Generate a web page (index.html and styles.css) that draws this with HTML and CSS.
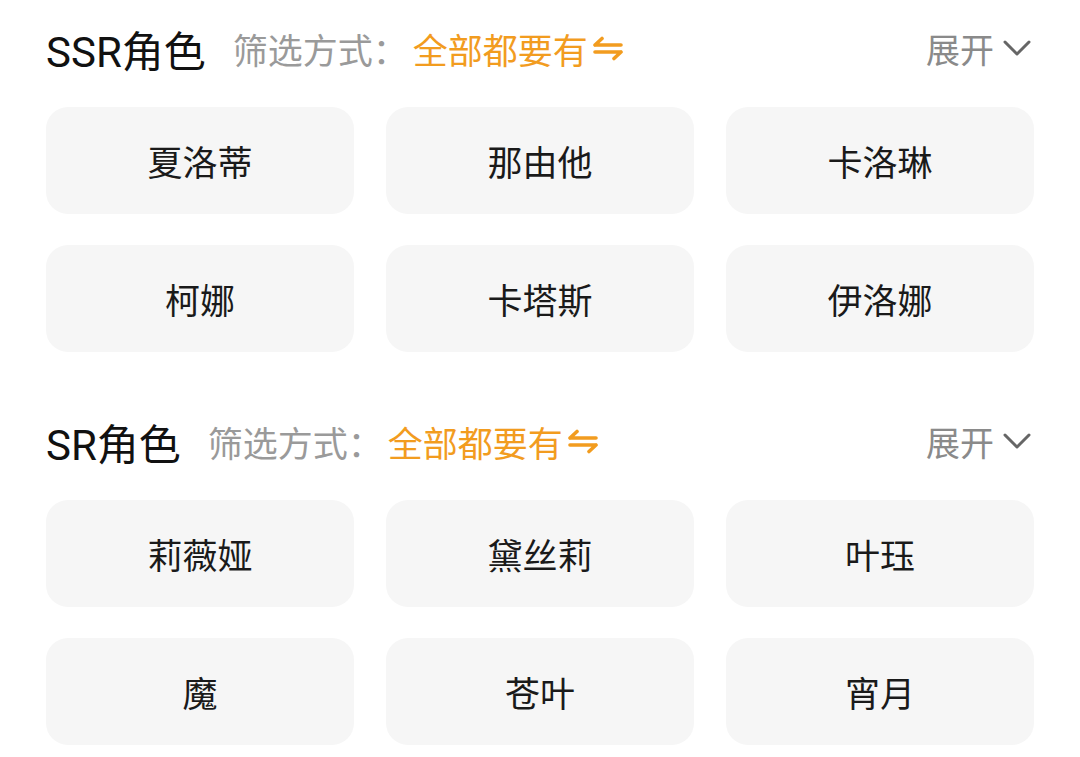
FILE: index.html
```html
<!DOCTYPE html>
<html lang="zh-CN">
<head>
<meta charset="utf-8">
<link rel="stylesheet" href="styles.css">
</head>
<body>
<div class="page">
  <section class="section">
    <div class="header">
      <span class="title">SSR角色</span>
      <span class="filter-label">筛选方式：</span>
      <span class="filter-value">全部都要有</span>
      <svg class="swap" width="30" height="26" viewBox="0 0 30 26"><path d="M2 10 H28 M2 10 L9 3.5 M2 17 H28 M28 17 L21 23.5" fill="none" stroke="#f29c1f" stroke-width="3.6" stroke-linecap="round" stroke-linejoin="round"/></svg>
      <span class="spacer"></span>
      <span class="expand">展开</span>
      <svg class="chev" width="30" height="20" viewBox="0 0 30 20"><path d="M3 4 L15 16 L27 4" fill="none" stroke="#666" stroke-width="3" stroke-linecap="round" stroke-linejoin="round"/></svg>
    </div>
    <div class="grid">
      <div class="card">夏洛蒂</div>
      <div class="card">那由他</div>
      <div class="card">卡洛琳</div>
      <div class="card">柯娜</div>
      <div class="card">卡塔斯</div>
      <div class="card">伊洛娜</div>
    </div>
  </section>
  <section class="section second">
    <div class="header">
      <span class="title">SR角色</span>
      <span class="filter-label">筛选方式：</span>
      <span class="filter-value">全部都要有</span>
      <svg class="swap" width="30" height="26" viewBox="0 0 30 26"><path d="M2 10 H28 M2 10 L9 3.5 M2 17 H28 M28 17 L21 23.5" fill="none" stroke="#f29c1f" stroke-width="3.6" stroke-linecap="round" stroke-linejoin="round"/></svg>
      <span class="spacer"></span>
      <span class="expand">展开</span>
      <svg class="chev" width="30" height="20" viewBox="0 0 30 20"><path d="M3 4 L15 16 L27 4" fill="none" stroke="#666" stroke-width="3" stroke-linecap="round" stroke-linejoin="round"/></svg>
    </div>
    <div class="grid">
      <div class="card">莉薇娅</div>
      <div class="card">黛丝莉</div>
      <div class="card">叶珏</div>
      <div class="card">魔</div>
      <div class="card">苍叶</div>
      <div class="card">宵月</div>
    </div>
  </section>
</div>
</body>
</html>
```
FILE: styles.css
```css
html, body {
  margin: 0;
  padding: 0;
  background: #ffffff;
}
.page {
  padding: 16px 46px 0 46px;
  font-family: "Noto Sans CJK SC", sans-serif;
}
.section.second {
  margin-top: 57px;
}
.header {
  height: 64px;
  display: flex;
  align-items: center;
  margin-bottom: 27px;
}
.title {
  font-family: Roboto, "Noto Sans CJK SC", sans-serif;
  font-size: 42px;
  color: #111111;
  font-weight: 400;
  margin-right: 27px;
}
.filter-label {
  font-size: 35px;
  color: #9a9a9a;
}
.filter-value {
  font-size: 35px;
  color: #f29c1f;
  margin-left: 5px;
}
.swap {
  margin-left: 5px;
}
.spacer {
  flex: 1;
}
.expand {
  font-size: 34px;
  color: #8a8a8a;
}
.chev {
  margin-left: 8px;
  margin-right: 2px;
}
.grid {
  display: grid;
  grid-template-columns: repeat(3, 308px);
  column-gap: 32px;
  row-gap: 31px;
}
.card {
  height: 107px;
  background: #f6f6f6;
  border-radius: 22px;
  display: flex;
  align-items: center;
  justify-content: center;
  font-size: 35px;
  color: #1a1a1a;
}
```
